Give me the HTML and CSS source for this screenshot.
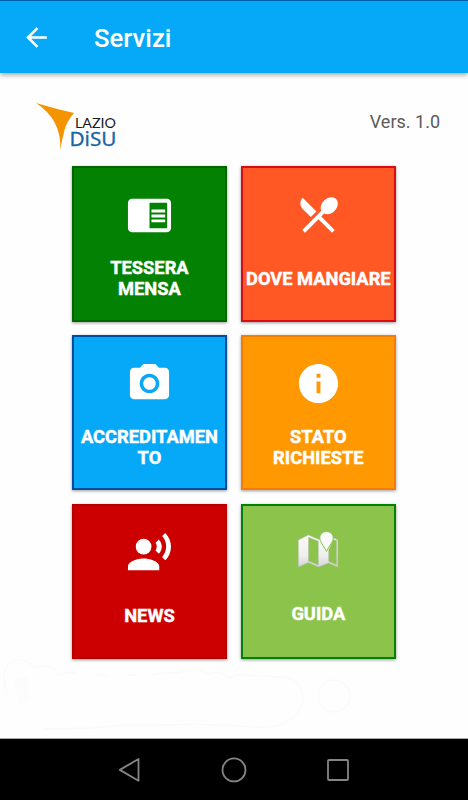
FILE: index.html
```html
<!DOCTYPE html>
<html lang="it">
<head>
<meta charset="utf-8">
<title>Servizi</title>
<link rel="stylesheet" href="styles.css">
</head>
<body>
<div class="app">
  <header class="toolbar">
    <svg class="back" viewBox="0 0 24 24"><path d="M20 11H7.830l5.590-5.590L12 4l-8 8 8 8 1.410-1.410L7.830 13H20v-2z"/></svg>
    <h1 class="title">Servizi</h1>
  </header>
  <main class="content">
    <div class="brand">
      <svg class="logo" viewBox="0 0 84 50">
        <path fill="#f39400" d="M0 0Q20 6 38 10Q31 18 28.500 27Q26 37 24.200 47Q26 17 0 0Z"/>
        <text class="logo-top" x="39" y="25.300" textLength="41" lengthAdjust="spacingAndGlyphs">LAZIO</text>
        <text class="logo-main" x="33.500" y="43" textLength="47" lengthAdjust="spacingAndGlyphs">DiSU</text>
      </svg>
      <span class="version">Vers. 1.0</span>
    </div>
    <div class="grid">
      <a class="tile green">
        <svg class="icon" viewBox="0 0 24 24"><path d="M13 12h7v1.500h-7zm0-2.500h7V11h-7zm0 5h7V16h-7zM21 4H3c-1.100 0-2 .9-2 2v13c0 1.100.9 2 2 2h18c1.100 0 2-.9 2-2V6c0-1.100-.9-2-2-2zm0 15h-9V6h9v13z"/></svg>
        <span class="label">TESSERA<br>MENSA</span>
      </a>
      <a class="tile coral">
        <svg class="icon" viewBox="0 0 24 24"><path d="M8.100 13.340l2.830-2.830L3.910 3.500c-1.560 1.560-1.560 4.090 0 5.660l4.190 4.180zm6.780-1.810c1.530.71 3.680.21 5.270-1.380 1.910-1.910 2.280-4.650.81-6.120-1.460-1.460-4.200-1.100-6.120.81-1.590 1.590-2.090 3.740-1.380 5.270L3.700 19.870l1.410 1.410L12 14.410l6.880 6.880 1.410-1.410L13.410 13l1.470-1.470z"/></svg>
        <span class="label">DOVE MANGIARE</span>
      </a>
      <a class="tile blue">
        <svg class="icon" viewBox="0 0 24 24"><circle cx="12" cy="12" r="3.200"/><path d="M9 2L7.170 4H4c-1.100 0-2 .9-2 2v12c0 1.100.9 2 2 2h16c1.100 0 2-.9 2-2V6c0-1.100-.9-2-2-2h-3.170L15 2H9zm3 15c-2.760 0-5-2.240-5-5s2.240-5 5-5 5 2.240 5 5-2.240 5-5 5z"/></svg>
        <span class="label">ACCREDITAMEN<br>TO</span>
      </a>
      <a class="tile orange">
        <svg class="icon" viewBox="0 0 24 24"><path d="M12 2C6.480 2 2 6.480 2 12s4.480 10 10 10 10-4.480 10-10S17.520 2 12 2zm1 15h-2v-6h2v6zm0-8h-2V7h2v2z"/></svg>
        <span class="label">STATO<br>RICHIESTE</span>
      </a>
      <a class="tile red">
        <svg class="icon" viewBox="0 0 24 24"><circle cx="9" cy="9" r="4"/><path d="M9 15c-2.670 0-8 1.340-8 4v2h16v-2c0-2.660-5.330-4-8-4zm7.760-9.640l-1.680 1.690c.84 1.180.84 2.710 0 3.890l1.680 1.690c2.020-2.020 2.020-5.070 0-7.270zM20.070 2l-1.630 1.630c2.770 3.020 2.770 7.560 0 10.740L20.070 16c3.900-3.890 3.910-9.950 0-14z"/></svg>
        <span class="label news">NEWS</span>
      </a>
      <a class="tile lime">
        <svg class="icon" viewBox="0 0 47 47">
          <defs><linearGradient id="paper" x1="0" y1="0" x2="0" y2="1"><stop offset="0" stop-color="#fafafa"/><stop offset=".65" stop-color="#eee"/><stop offset="1" stop-color="#d4d4d4"/></linearGradient></defs>
          <path fill="url(#paper)" fill-rule="evenodd" stroke="#b5bda8" stroke-width=".5" d="M3.300 11L13.300 6L24 10.500L26 10C27 15 29 18 31.500 22C34 18 36 14 37 8L42.800 11V38L33.500 34L23.500 38L13.300 33.500L3.300 38ZM13.500 8.300V32L23.300 36V12.200ZM33.700 21V32.500L41.600 35.800V11.500L37.800 10.500C37 14 35.500 17 33.700 21Z"/>
          <path fill="#fafafa" stroke="#8bc34a" stroke-width="1" d="M31.500 2.500C27.800 2.500 24.800 5.300 24.800 8.900C24.800 13 28.500 16 31.500 22.500C34.500 16 38.200 13 38.200 8.900C38.200 5.300 35.200 2.500 31.500 2.500Z"/>
        </svg>
        <span class="label guide">GUIDA</span>
      </a>
    </div>
    <svg class="traces" viewBox="0 0 468 79" fill="none" stroke="#fafafa" stroke-width="1.300">
      <path d="M7 35C2 19 3 5 15 1.500C25 -1 31 5 35 9C47 4 54 9 60 16Q68 11 77 15M96 17Q102 14 108 17M126 17Q132 15 138 17M150 17C163 11 170 16 181 13C195 9 202 12 209 15C221 11 224 16 229 19C239 13 250 17 260 17L284 18C298 20 303 31 303 40C303 52 293 61 277 67C254 71 238 65 221 66C190 64 153 67 125 66L94 69L43 70"/>
      <circle cx="334" cy="37" r="16"/>
      <path fill="#fcfcfc" stroke="none" d="M14 20L26 18L30 42L19 47Z"/>
    </svg>
  </main>
  <nav class="navbar">
    <svg viewBox="0 0 28 28"><path d="M22.500 3V24.800L3.800 13.900Z"/></svg>
    <svg viewBox="0 0 28 28"><circle cx="14" cy="13.900" r="11.500"/></svg>
    <svg viewBox="0 0 28 28"><rect x="4" y="4" width="20" height="20" rx="1"/></svg>
  </nav>
</div>
</body>
</html>
```
FILE: styles.css
```css
* { box-sizing: border-box; }
body { margin: 0; font-family: Roboto, "Liberation Sans", sans-serif; background: #fefefe; }
.app { display: flex; flex-direction: column; height: 800px; width: 468px; overflow: hidden; }

.toolbar {
  flex: none;
  display: flex;
  align-items: center;
  gap: 42px;
  height: 73px;
  padding: 1px 21px 0;
  background: #05a9f7;
  border-top: 1px solid #0260a8;
  box-shadow: 0 2px 5px rgba(0, 0, 0, .35);
}
.back { width: 31px; height: 31px; fill: #fff; }
.title { margin: 0; color: #fff; font-size: 25.7px; line-height: 30px; font-weight: 500; }

.content { flex: 1; display: flex; flex-direction: column; }
.brand { display: flex; justify-content: space-between; height: 93px; padding: 30px 28px 0 36px; }
.logo { width: 84px; height: 50px; }
.logo-top { font: 13px Lato, sans-serif; fill: #171b22; }
.logo-main { font: 20px "Noto Sans", sans-serif; fill: #1766a6; stroke: #1766a6; stroke-width: .3px; }
.version { margin-top: 8px; font-size: 18px; line-height: 22px; color: #5b5b5b; }

.grid { display: grid; grid-template-columns: 155.5px 155.5px; grid-auto-rows: 155.5px; gap: 13.4px; padding-left: 71.7px; }
.tile {
  display: flex;
  flex-direction: column;
  align-items: center;
  padding-top: 23px;
  border: 2px solid;
  color: #fff;
  box-shadow: 0 1px 3px rgba(0, 0, 0, .4);
}
.icon { flex: none; width: 47px; height: 47px; fill: #fff; }
.label {
  display: grid;
  place-content: center;
  width: 100%;
  height: 42px;
  margin-top: 19.3px;
  text-align: center;
  white-space: nowrap;
  font-size: 18.3px;
  line-height: 21px;
  font-weight: 700;
  -webkit-text-stroke: .45px #fff;
}
.news { margin-top: 18.3px; }
.guide { margin-top: 17px; }
.green { background: #028102; border-color: #016601; }
.coral { background: #ff5824; border-color: #d60e12; }
.blue { background: #05a9f7; border-color: #014c9d; }
.orange { background: #ff9801; border-color: #f57c05; }
.red { background: #cc0000; border-color: #b50000; }
.lime { background: #8bc34b; border-color: #028002; }
.traces { width: 468px; height: 79px; }

.navbar {
  flex: none;
  display: flex;
  justify-content: center;
  align-items: center;
  gap: 76px;
  height: 62px;
  background: #000;
  border-top: 1px solid #aaa;
}
.navbar svg { width: 28px; height: 28px; fill: none; stroke: #858585; stroke-width: 1.8; stroke-linejoin: round; }
```
